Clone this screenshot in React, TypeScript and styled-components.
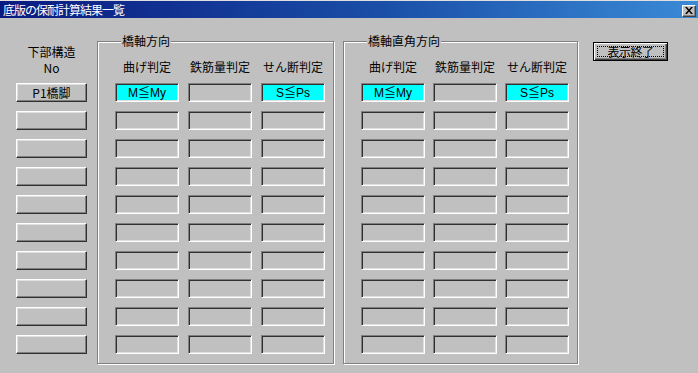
import React, { FC } from 'react'
import styled, { createGlobalStyle } from 'styled-components'

const GlobalStyle = createGlobalStyle`
  html, body {
    margin: 0;
    padding: 0;
    background: #c0c0c0;
  }
  body {
    font-family: "Noto Sans CJK JP", "DejaVu Sans", sans-serif;
    font-size: 12px;
    color: #000;
  }
`

const ROWS = 10

type Judge = { text: string; hit?: boolean }

const axisRows: Judge[][] = Array.from({ length: ROWS }, (_, i) =>
  i === 0
    ? [{ text: 'M≦My', hit: true }, { text: '' }, { text: 'S≦Ps', hit: true }]
    : [{ text: '' }, { text: '' }, { text: '' }]
)

const headers = ['曲げ判定', '鉄筋量判定', 'せん断判定']

const JudgeGroup: FC<{ title: string; width: number; gap: number }> = ({ title, width, gap }) => (
  <StyledGroup $width={width}>
    <StyledLegend>{title}</StyledLegend>
    <StyledGrid $gap={gap}>
      {headers.map((h) => (
        <StyledHeader key={h}>{h}</StyledHeader>
      ))}
      {axisRows.map((row, r) =>
        row.map((cell, c) => (
          <StyledField key={`${r}-${c}`} $hit={cell.hit}>
            {cell.text}
          </StyledField>
        ))
      )}
    </StyledGrid>
  </StyledGroup>
)

const App: FC = () => {
  return (
    <>
      <GlobalStyle />
      <StyledWindow>
        <StyledTitleBar>
          <StyledTitle>底版の保耐計算結果一覧</StyledTitle>
          <StyledClose>
            <svg width="8" height="7" viewBox="0 0 8 7">
              <path d="M0 0h2l2 2.5L6 0h2L5 3.5 8 7H6L4 4.5 2 7H0l3-3.5z" fill="#000" />
            </svg>
          </StyledClose>
        </StyledTitleBar>
        <StyledBody>
          <StyledLeftColumn>
            <StyledColumnLabel>
              下部構造
              <br />
              No
            </StyledColumnLabel>
            <StyledPierList>
              {Array.from({ length: ROWS }, (_, i) => (
                <StyledPierButton key={i}>{i === 0 ? 'P1橋脚' : ''}</StyledPierButton>
              ))}
            </StyledPierList>
          </StyledLeftColumn>
          <JudgeGroup title="橋軸方向" width={237} gap={9} />
          <JudgeGroup title="橋軸直角方向" width={235} gap={8} />
          <StyledCloseButton>
            <span>表示終了</span>
          </StyledCloseButton>
        </StyledBody>
      </StyledWindow>
    </>
  )
}

const StyledWindow = styled.div`
  width: 698px;
  height: 373px;
  background: #c0c0c0;
  border-top: 1px solid #dfdfdf;
  box-sizing: border-box;
  overflow: hidden;
`

const StyledTitleBar = styled.div`
  height: 17px;
  display: flex;
  align-items: center;
  justify-content: space-between;
  padding: 0 2px 0 3px;
  background: linear-gradient(to right, #0a1a80 0%, #1a4fa8 55%, #3a8ad6 100%);
`

const StyledTitle = styled.div`
  color: #fff;
  font-size: 12px;
  line-height: 14px;
  letter-spacing: -1px;
  padding-top: 1px;
`

const StyledClose = styled.div`
  width: 14px;
  height: 12px;
  display: flex;
  align-items: center;
  justify-content: center;
  background: #c0c0c0;
  box-sizing: border-box;
  border: 1px solid;
  border-color: #fff #404040 #404040 #fff;
  box-shadow: inset -1px -1px 0 #808080;
  margin-top: 2px;
`

const StyledBody = styled.div`
  display: flex;
  align-items: flex-start;
  padding-left: 16px;
`

const StyledLeftColumn = styled.div`
  width: 71px;
  display: flex;
  flex-direction: column;
`

const StyledColumnLabel = styled.div`
  margin-top: 26px;
  text-align: center;
  line-height: 16px;
  height: 32px;
  margin-bottom: 7px;
`

const StyledPierList = styled.div`
  display: flex;
  flex-direction: column;
  gap: 9px;
`

const StyledPierButton = styled.div`
  height: 19px;
  box-sizing: border-box;
  border: 1px solid;
  border-color: #fff #303030 #303030 #fff;
  box-shadow: inset -1px -1px 0 #808080, inset 1px 1px 0 #dfdfdf;
  display: flex;
  align-items: center;
  justify-content: center;
  line-height: 14px;
`

const StyledGroup = styled.fieldset<{ $width: number }>`
  width: ${(p) => p.$width}px;
  height: 329px;
  box-sizing: border-box;
  margin: 17px 0 0 10px;
  padding: 12px 0 0 17px;
  border: 1px solid #808080;
  box-shadow: inset 1px 1px 0 #fff, 1px 1px 0 #fff;
  min-width: 0;

  & + & {
    margin-left: 9px;
  }
`

const StyledLegend = styled.legend`
  padding: 0 1px;
  margin-left: 6px;
  line-height: 12px;
  height: 12px;
  background: #c0c0c0;
`

const StyledGrid = styled.div<{ $gap: number }>`
  display: grid;
  grid-template-columns: repeat(3, 64px);
  grid-template-rows: 15px;
  grid-auto-rows: 19px;
  column-gap: ${(p) => p.$gap}px;
  row-gap: 9px;
`

const StyledHeader = styled.div`
  text-align: center;
  line-height: 15px;
  white-space: nowrap;
`

const StyledField = styled.div<{ $hit?: boolean }>`
  box-sizing: border-box;
  border: 1px solid;
  border-color: #808080 #fff #fff #808080;
  box-shadow: inset 1px 1px 0 #303030, inset -1px -1px 0 #dfdfdf;
  background: ${(p) => (p.$hit ? '#00ffff' : '#c0c0c0')};
  display: flex;
  align-items: center;
  justify-content: center;
  line-height: 14px;
  font-family: "Liberation Sans", "Noto Sans CJK JP", sans-serif;
`

const StyledCloseButton = styled.div`
  margin: 24px 0 0 15px;
  width: 75px;
  height: 19px;
  box-sizing: border-box;
  border: 1px solid #000;
  background: #c0c0c0;
  box-shadow: inset 1px 1px 0 #fff, inset -1px -1px 0 #404040, inset -2px -2px 0 #808080;
  padding: 3px;
  display: flex;

  span {
    flex: 1;
    border: 1px dotted #000;
    display: flex;
    align-items: center;
    justify-content: center;
    line-height: 11px;
    letter-spacing: -0.5px;
  }
`

export default App
